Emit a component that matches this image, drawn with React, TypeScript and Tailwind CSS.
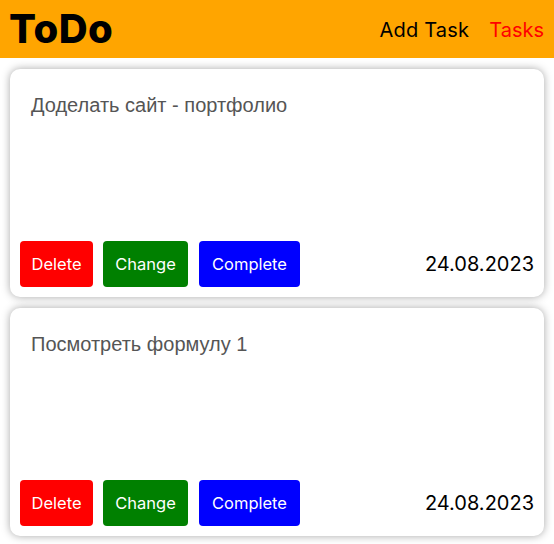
const tasks = [
  { id: 1, text: "Доделать сайт - портфолио", date: "24.08.2023" },
  { id: 2, text: "Посмотреть формулу 1", date: "24.08.2023" },
];

function TaskCard({ text, date }: { text: string; date: string }) {
  return (
    <div className="h-[228px] bg-white rounded-[10px] shadow-[0_0_8px_rgba(0,0,0,0.35)] p-[10px] flex flex-col justify-between">
      <p className="px-[11px] pt-[14px] text-[20px] leading-[24px] text-[#555] font-['Liberation_Sans',Arial,sans-serif]">
        {text}
      </p>
      <div className="flex items-center justify-between">
        <div className="flex gap-[10px] text-white text-[16.5px] font-['Inter',sans-serif]">
          <button className="w-[73px] h-[46px] rounded-[4px] bg-[#ff0000]">Delete</button>
          <button className="w-[85px] h-[46px] rounded-[4px] bg-[#008000]">Change</button>
          <button className="ml-[1px] w-[101px] h-[46px] rounded-[4px] bg-[#0000ff]">Complete</button>
        </div>
        <span className="text-[20px] text-black font-['Inter',sans-serif]">{date}</span>
      </div>
    </div>
  );
}

export default function App() {
  return (
    <div className="w-[554px] min-h-[544px] bg-white font-['Inter',sans-serif]">
      {/* HEADER */}
      <header className="h-[58px] bg-[#ffa500] flex items-center justify-between pl-[9px] pr-[10px]">
        <h1 className="text-[40px] font-extrabold text-black leading-none tracking-[0.5px]">ToDo</h1>
        <nav className="flex gap-[20px] text-[20px] pt-[1px]">
          <a href="#" className="text-black tracking-[0.2px]">Add Task</a>
          <a href="#" className="text-[#ff0000]">Tasks</a>
        </nav>
      </header>

      {/* TASK LIST */}
      <main className="flex flex-col gap-[11px] px-[10px] pt-[11px]">
        {tasks.map((t) => (
          <TaskCard key={t.id} text={t.text} date={t.date} />
        ))}
      </main>
    </div>
  );
}
